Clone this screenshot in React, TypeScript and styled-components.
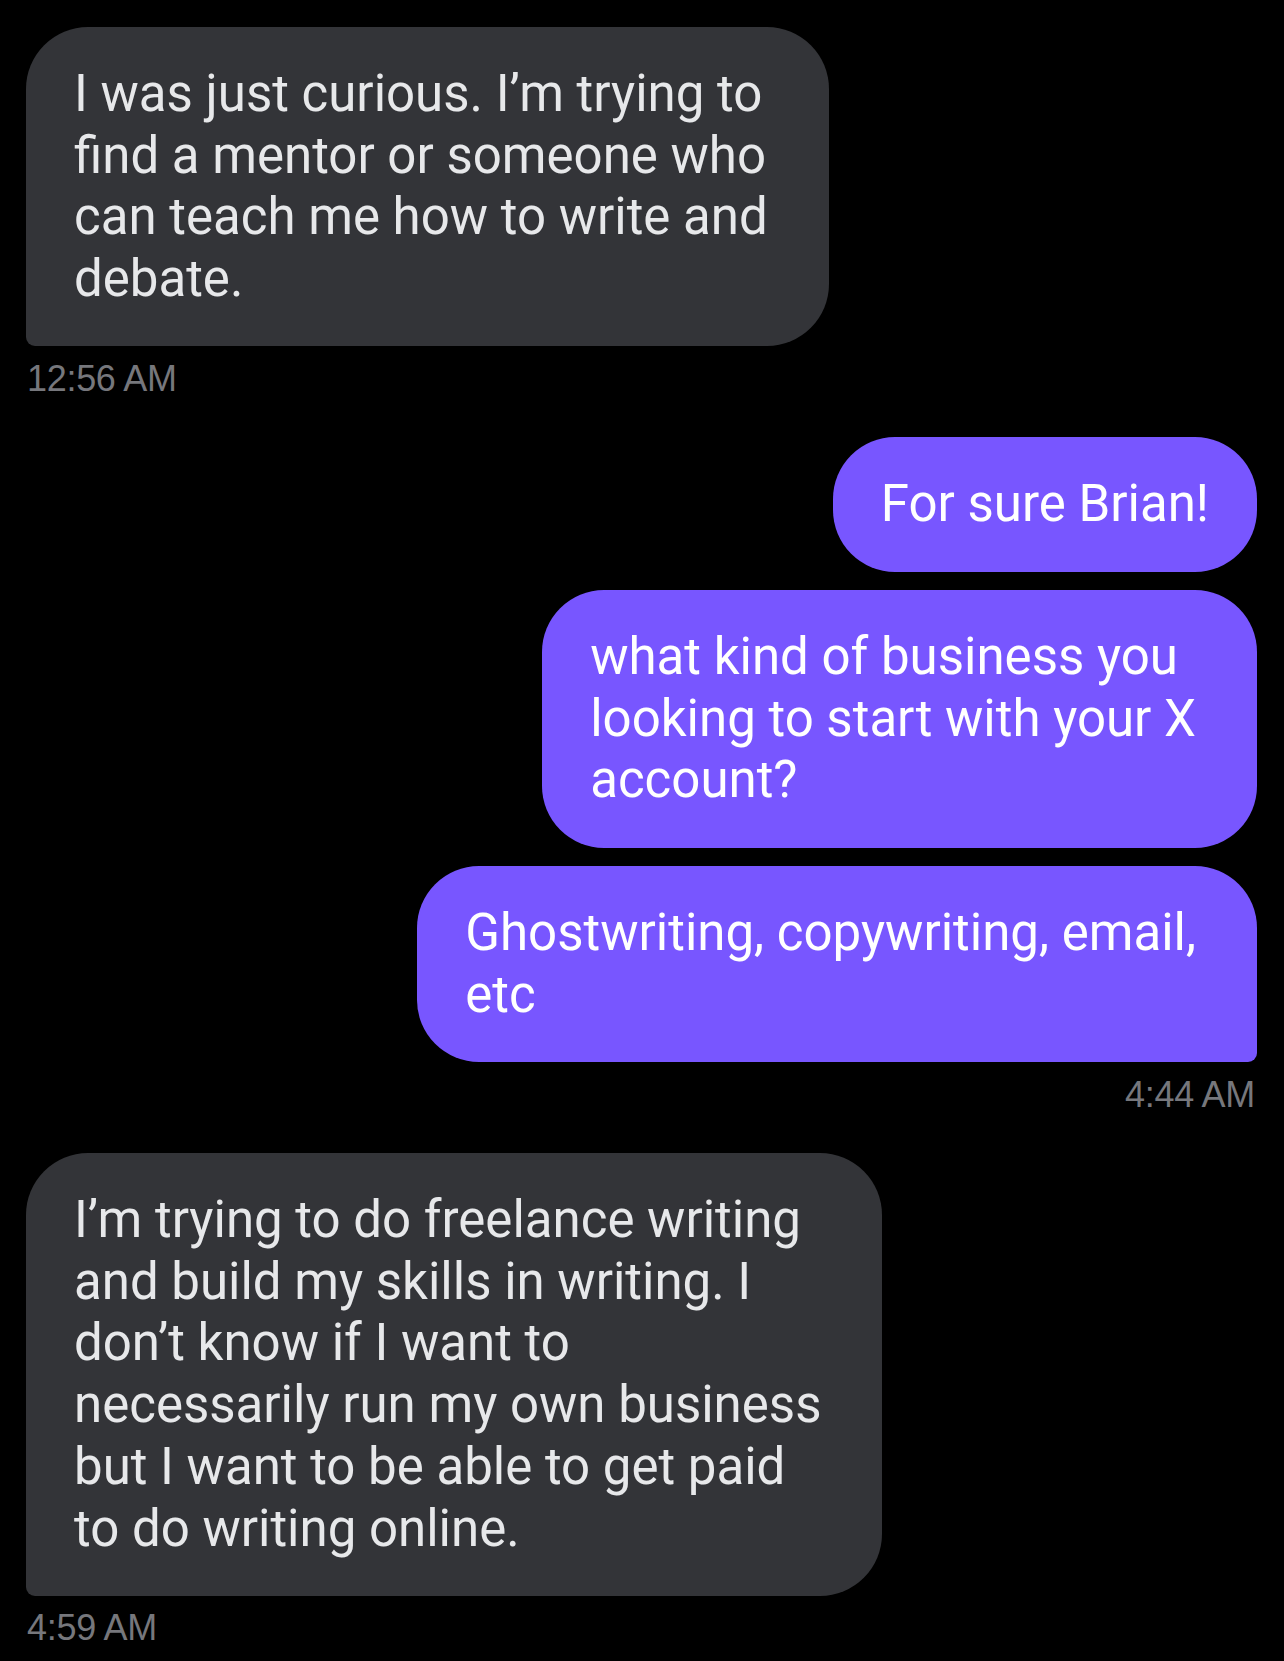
import React from "react";
import styled, { createGlobalStyle } from "styled-components";

const GlobalStyle = createGlobalStyle`
  html, body {
    margin: 0;
    padding: 0;
    background: #000000;
  }
  body {
    font-family: "Roboto", "Liberation Sans", sans-serif;
    -webkit-font-smoothing: antialiased;
  }
`;

const Thread = styled.main`
  display: flex;
  flex-direction: column;
  gap: 38px;
  padding: 26.5px 27px 40px 26px;
  min-height: 1661px;
  box-sizing: border-box;
  background: #000000;
`;

const Group = styled.section<{ $side: "sent" | "received" }>`
  display: flex;
  flex-direction: column;
  align-items: ${(p) => (p.$side === "sent" ? "flex-end" : "flex-start")};
  gap: 18px;
`;

const R = 62;
const TAIL = 9;

const Bubble = styled.div<{
  $side: "sent" | "received";
  $tail: boolean;
  $multi: boolean;
}>`
  box-sizing: border-box;
  width: fit-content;
  padding: 36.5px ${(p) => (p.$multi ? "61px" : "48px")} 36.5px 48px;
  font-family: "Roboto", "Liberation Sans", sans-serif;
  font-size: 51px;
  line-height: 61.7px;
  white-space: nowrap;
  background: ${(p) => (p.$side === "sent" ? "#7856ff" : "#333438")};
  color: ${(p) => (p.$side === "sent" ? "#ffffff" : "#e7e8ea")};
  border-radius: ${(p) =>
    p.$tail
      ? p.$side === "sent"
        ? `${R}px ${R}px ${TAIL}px ${R}px`
        : `${R}px ${R}px ${R}px ${TAIL}px`
      : `${R}px`};
`;

const Stamp = styled.div<{ $side: "sent" | "received" }>`
  margin-top: -5.5px;
  padding: 0 ${(p) => (p.$side === "sent" ? "2px" : "0")} 0 ${(p) => (p.$side === "sent" ? "0" : "1px")};
  font-family: "Liberation Sans", "Roboto", sans-serif;
  font-size: 36px;
  line-height: 40px;
  letter-spacing: -0.3px;
  color: #76777c;
  align-self: ${(p) => (p.$side === "sent" ? "flex-end" : "flex-start")};
`;

type Msg = { lines: string[] };
type Conv = { side: "sent" | "received"; time: string; messages: Msg[] };

const conversation: Conv[] = [
  {
    side: "received",
    time: "12:56 AM",
    messages: [
      {
        lines: [
          "I was just curious. I’m trying to",
          "find a mentor or someone who",
          "can teach me how to write and",
          "debate.",
        ],
      },
    ],
  },
  {
    side: "sent",
    time: "4:44 AM",
    messages: [
      { lines: ["For sure Brian!"] },
      {
        lines: [
          "what kind of business you",
          "looking to start with your X",
          "account?",
        ],
      },
      { lines: ["Ghostwriting, copywriting, email,", "etc"] },
    ],
  },
  {
    side: "received",
    time: "4:59 AM",
    messages: [
      {
        lines: [
          "I’m trying to do freelance writing",
          "and build my skills in writing. I",
          "don’t know if I want to",
          "necessarily run my own business",
          "but I want to be able to get paid",
          "to do writing online.",
        ],
      },
    ],
  },
];

export default function App() {
  return (
    <>
      <GlobalStyle />
      <Thread>
        {conversation.map((g, gi) => (
          <Group key={gi} $side={g.side}>
            {g.messages.map((m, mi) => (
              <Bubble
                key={mi}
                $side={g.side}
                $tail={mi === g.messages.length - 1}
                $multi={m.lines.length > 1}
              >
                {m.lines.map((l, li) => (
                  <React.Fragment key={li}>
                    {l}
                    {li < m.lines.length - 1 && <br />}
                  </React.Fragment>
                ))}
              </Bubble>
            ))}
            <Stamp $side={g.side}>{g.time}</Stamp>
          </Group>
        ))}
      </Thread>
    </>
  );
}
